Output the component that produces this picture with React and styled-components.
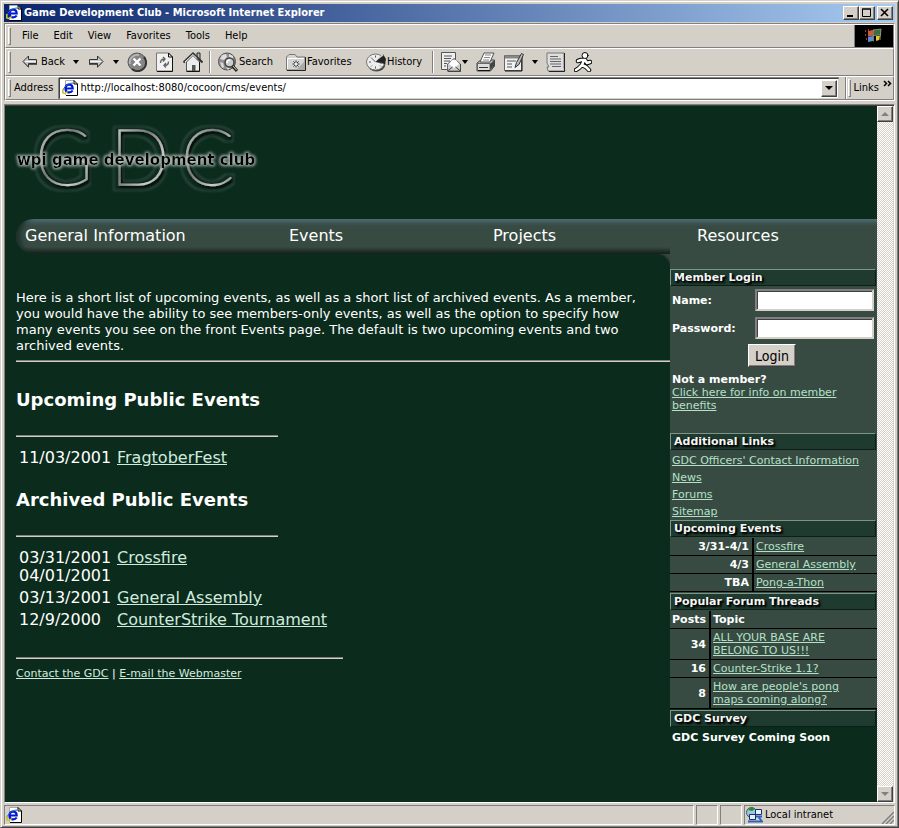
import React from 'react';
import styled, { createGlobalStyle, css } from 'styled-components';

const face = '#d4d0c8';
const deep = '#0b2b1d';
const slate = '#374b42';
const mint = '#b5e0c8';
const ui = '"DejaVu Sans Condensed", "DejaVu Sans", sans-serif';
const web = '"DejaVu Sans", sans-serif';

const Global = createGlobalStyle`
  * { box-sizing: border-box; }
  body { margin: 0; background: ${face}; }
  button, input { font: inherit; margin: 0; padding: 0; border: 0; border-radius: 0; }
  svg { display: block; flex: none; }
`;

const Window = styled.div`
  display: flex;
  flex-direction: column;
  min-height: 100vh;
  padding: 2px;
  background: ${face};
  border: 1px solid;
  border-color: ${face} #404040 #404040 ${face};
  box-shadow: inset 1px 1px #fff, inset -1px -1px #808080;
  font: 11px/14px ${ui};
  color: #000;
`;

const TitleBar = styled.header`
  display: flex;
  align-items: center;
  height: 18px;
  margin: 1px;
  padding: 0 2px;
  gap: 2px;
  background: linear-gradient(90deg, #0a246a, #a6caf0);
`;

const WindowTitle = styled.h1`
  flex: 1;
  margin: 0;
  font: bold 11px/16px ${ui};
  color: #fff;
  white-space: nowrap;
`;

const raised = css`
  background: ${face};
  border: 1px solid;
  border-color: #fff #404040 #404040 #fff;
  box-shadow: inset -1px -1px #808080;
`;

const CaptionButton = styled.button`
  ${raised}
  display: grid;
  place-items: center;
  width: 16px;
  height: 14px;
`;

const CaptionGroup = styled.div`
  display: flex;
  gap: ${p => p.$gap}px;
`;

const Rebar = styled.div`
  margin: 0 1px;
  border: 1px solid;
  border-color: #808080 #fff #fff #808080;
`;

const Band = styled.div`
  display: flex;
  align-items: center;
  height: ${p => p.$h}px;
  border: 1px solid;
  border-color: #fff #808080 #808080 #fff;
`;

const Grip = styled.span`
  width: 3px;
  height: ${p => p.$h}px;
  margin-left: 2px;
  border: 1px solid;
  border-color: #fff #808080 #808080 #fff;
`;

const Menu = styled.nav`
  display: flex;
  flex: 1;
  gap: 15px;
  padding-left: 11px;
`;

const PlainButton = styled.button`
  background: none;
  color: #000;
  line-height: 14px;
`;

const Throbber = styled.div`
  display: grid;
  place-items: center;
  align-self: stretch;
  width: 39px;
  border-left: 1px solid #808080;
  background: #000;
`;

const Tools = styled.div`
  display: flex;
  align-items: center;
  padding-left: 11px;
`;

const Tool = styled.button`
  display: flex;
  align-items: center;
  gap: ${p => p.$gap || 1}px;
  width: ${p => p.$w}px;
  height: 22px;
  background: none;
  white-space: nowrap;
  color: #000;
`;

const Divider = styled.span`
  width: 2px;
  height: 22px;
  margin-right: 7px;
  border-left: 1px solid #808080;
  border-right: 1px solid #fff;
`;

const AddressLabel = styled.label`
  padding: 0 6px 0 3px;
`;

const AddressBox = styled.div`
  display: flex;
  flex: 1;
  align-items: center;
  height: 21px;
  padding: 1px 1px 1px 2px;
  background: #fff;
  border: 1px solid;
  border-color: #404040 ${face} ${face} #404040;
  box-shadow: 0 -1px #808080, -1px 0 #808080;
`;

const AddressInput = styled.input`
  flex: 1;
  min-width: 0;
  padding-left: 2px;
  background: transparent;
  outline: 0;
`;

const SquareButton = styled.button`
  ${raised}
  display: grid;
  place-items: center;
  width: 16px;
  height: ${p => p.$h || 16}px;
`;

const LinksBand = styled.div`
  display: flex;
  align-items: center;
  align-self: stretch;
  gap: 3px;
  margin-left: 6px;
  border-left: 1px solid #808080;
  box-shadow: inset 1px 0 #fff;
`;

const Chevron = styled.span`
  align-self: flex-start;
`;

const View = styled.div`
  display: flex;
  flex: 1;
  margin: 3px 1px 0;
  padding: 1px 1px 0 0;
  border: 1px solid;
  border-color: #808080 #fff #fff #808080;
  box-shadow: inset 0 1px #404040;
`;

const Page = styled.main`
  flex: 1;
  min-width: 0;
  padding-bottom: 54px;
  background: ${deep};
  color: #fff;
  font: 13px/16px ${web};
`;

const Scrollbar = styled.div`
  display: flex;
  flex-direction: column;
  justify-content: space-between;
  width: 16px;
  background: repeating-conic-gradient(#fff 0 25%, ${face} 0 50%) 0 0 / 2px 2px;
`;

const LogoLink = styled.a`
  display: block;
  width: 260px;
`;

const SiteNav = styled.nav`
  display: grid;
  grid-template-columns: 264fr 204fr 204fr 180fr;
  align-items: center;
  height: 35px;
  margin-left: 11px;
  padding: 0 0 1px 9px;
  border-radius: 18px 0 0 18px;
  background:
    linear-gradient(${slate}, ${slate}) right bottom / 207px 28px no-repeat,
    linear-gradient(#4f6f66 0, #3d545a 4px, ${slate} 7px, ${slate} 28px, #17241f 34px);
  box-shadow: inset 9px 0 5px -5px #1c3029;
`;

const NavLink = styled.a`
  color: #fff;
  font-size: 16px;
  line-height: 20px;
  text-decoration: none;
`;

const Columns = styled.div`
  display: flex;
  align-items: flex-start;
  background: linear-gradient(${slate}, ${slate}) top / 100% 24px no-repeat;
`;

const Article = styled.article`
  flex: 1;
  min-width: 0;
  padding: 36px 0 0 11px;
  border-radius: 0 14px 0 0;
  background: ${deep};
  box-shadow: 0 0 4px #101a16;
  clip-path: inset(0);
`;

const Intro = styled.p`
  margin: 0 0 6px;
  padding-right: 14px;
`;

const Rule = styled.hr`
  width: ${p => (p.$w ? p.$w + 'px' : 'auto')};
  margin: 0;
  border: 0;
  border-top: 1px solid #808080;
  border-bottom: 1px solid ${face};
`;

const Heading = styled.h2`
  margin: ${p => p.$top}px 0 24px;
  font-size: 18px;
  line-height: 22px;
`;

const EventTable = styled.table`
  margin-top: 9px;
  border-spacing: 2px;
  font-size: 16px;
  line-height: 18px;

  td { padding: 1px; vertical-align: top; }
  td:first-child { width: 96px; }
`;

const PaleLink = styled.a`
  color: #d0ebde;
`;

const Footer = styled.footer`
  padding-top: 7px;
  font-size: 11px;
`;

const Spaced = styled.div`
  margin-top: ${p => p.$top}px;
`;

const Sidebar = styled.aside`
  width: 207px;
  font-size: 11px;
  line-height: 13px;
`;

const Panel = styled.section`
  background: ${p => (p.$dark ? deep : slate)};
  padding-top: ${p => p.$top || 0}px;
`;

const PanelTitle = styled.h3`
  height: 17px;
  margin: 0 1px ${p => p.$gap || 0}px 0;
  padding-left: 3px;
  border: 1px solid;
  border-color: #7f9489 #0a2016 #0a2016 #7f9489;
  background: #1f3a2e;
  font-size: 11px;
  line-height: 16px;
  color: #f4f6f4;
  text-shadow: 1px 1px 2px #000, 2px 2px 2px #000;
`;

const Field = styled.div`
  display: grid;
  grid-template-columns: 83px 1fr;
  align-items: center;
  height: 28px;
  padding: 0 3px 0 2px;
  font-weight: bold;
`;

const FieldInput = styled.input`
  width: 100%;
  height: 22px;
  padding: 2px;
  background: #fff;
  border: 2px solid;
  border-color: #808080 ${face} ${face} #808080;
  box-shadow: inset 1px 1px #404040;
`;

const LoginButton = styled.button`
  ${raised}
  display: block;
  height: 23px;
  margin: 2px auto 6px 78px;
  padding: 0 6px;
  font: 14px/20px ${ui};
  color: #000;
`;

const MemberNote = styled.p`
  margin: 0;
  padding: 0 20px 21px 2px;
`;

const MintLink = styled.a`
  color: ${mint};
`;

const LinkList = styled.ul`
  margin: 0;
  padding: 2px 0 0 2px;
  list-style: none;
  line-height: 17px;
`;

const SideTable = styled.table`
  width: 100%;
  border-collapse: separate;
  border-spacing: 0;
  table-layout: fixed;

  th, td {
    padding: 2px;
    border-bottom: 1px solid #000;
    text-align: left;
  }
  tr > :last-child {
    padding-right: ${p => p.$inset || 2}px;
  }
  tr > :first-child {
    width: ${p => p.$first}px;
    padding: 2px 3px 2px 0;
    border-right: 2px solid #000;
    text-align: right;
    font-weight: bold;
  }
`;

const SurveyNote = styled.p`
  margin: 0;
  padding: 3px 2px;
  font-weight: bold;
`;

const StatusBar = styled.footer`
  display: grid;
  grid-template-columns: 1fr 22px 22px 151px;
  gap: 2px;
  height: 20px;
  margin: 2px 1px 0;
`;

const StatusCell = styled.div`
  display: flex;
  align-items: center;
  gap: 2px;
  padding-left: 1px;
  border: 1px solid;
  border-color: #808080 #fff #fff #808080;
`;

const Sizer = styled.span`
  align-self: flex-end;
  margin-left: auto;
`;

const IEIcon = () => (
  <svg width="16" height="16" viewBox="0 0 16 16" aria-hidden="true">
    <path d="M4 .5h8l3 3v12H4z" fill="#fff" />
    <path d="M3.500 15V.5H12" fill="none" stroke="#aaa" />
    <path d="M4 15.500h11.500V4M12 .5v3.500h3.500z" fill="none" stroke="#000" />
    <path d="M3.500 8.500h7.200c0-5-7-5.500-7.200 0 0 5 5.500 4.500 7.200 2" fill="none" stroke="#0018d8" strokeWidth="2.200" />
    <path d="M1 13C-1 10 5 3 11 3" fill="none" stroke="#1a62c8" />
    <path d="M.8 9v4l2 .5 3-2" fill="none" stroke="#d8c820" strokeWidth="1.400" />
  </svg>
);

const Caret = ({ fill = '#000', up = false, w = 6 }) => (
  <svg width={w} height="4" viewBox="0 0 6 4" preserveAspectRatio="none" aria-hidden="true">
    <path d={up ? 'M0 4 3 0l3 4z' : 'M0 0h6L3 4z'} fill={fill} />
  </svg>
);

const Arrow = ({ right }) => (
  <svg width="16" height="14" viewBox="0 0 16 14" aria-hidden="true">
    <g transform={right ? 'translate(16 0) scale(-1 1)' : undefined}>
      <path d="M7 2v3h8v5H7v3L1.500 7.500z" fill="#555" />
      <path d="M6.500 1v3.500h8v4h-8V12L1 6.500z" fill="#c9c9c9" stroke="#333" />
      <path d="M3 6.500h11" stroke="#f4f4f4" />
    </g>
  </svg>
);

const StopIcon = () => (
  <svg width="20" height="20" viewBox="0 0 20 20" aria-hidden="true">
    <circle cx="10" cy="10" r="9" fill="#858585" stroke="#555" />
    <path d="M17 5a8.500 8.500 0 0 1-12 12" fill="none" stroke="#333" strokeWidth="2" />
    <path d="M3 12A7.500 7.500 0 0 1 12 3" fill="none" stroke="#b5b5b5" strokeWidth="2" />
    <path d="m6.500 6.500 7 7m0-7-7 7" stroke="#fff" strokeWidth="2.400" />
  </svg>
);

const RefreshIcon = () => (
  <svg width="17" height="20" viewBox="0 0 17 20" aria-hidden="true">
    <path d="M.5 1h12l4 4v14H.5z" fill="#f1f1f1" stroke="#777" />
    <path d="M16.500 5v14.500H1M12.500 1v4h4z" fill="none" stroke="#111" />
    <path d="M4.500 11c0-3 1.500-4 4-4M7 5l2 2-2 2.500M12.500 9.500c0 3-1.500 4-4 4M10 11l-2 2.500 2 2" fill="none" stroke="#666" strokeWidth="1.400" />
  </svg>
);

const HomeIcon = () => (
  <svg width="20" height="20" viewBox="0 0 20 20" aria-hidden="true">
    <path d="M14 8V1h3v9" fill="#bbb" stroke="#222" />
    <path d="M3.500 10 10 3.500l6.500 6.500v9h-13z" fill="#ececec" stroke="#555" />
    <path d="M16.500 10v9.500h-13" fill="none" stroke="#111" />
    <path d="m.5 10.500 9.500-9 9.500 9" fill="none" stroke="#333" strokeWidth="2" />
    <path d="m2 10 8-7.500 4 4" fill="none" stroke="#fff" />
    <path d="M9 13h3.500v6H9z" fill="#555" />
  </svg>
);

const SearchIcon = () => (
  <svg width="20" height="20" viewBox="0 0 20 20" aria-hidden="true">
    <circle cx="9" cy="9.500" r="8.500" fill="#909090" stroke="#555" />
    <path d="m4 3 4-1 1 3-3 3-4-1zM11 2l4 2v3l-4-2zM2 10l3 1 1 4-2 1zM8 15l4 1-2 2z" fill="#dedede" />
    <circle cx="11.500" cy="10.500" r="4.500" fill="#ccc" stroke="#444" strokeWidth="1.500" />
    <path d="M9 11c0-2 1-3 3-3" fill="none" stroke="#fff" strokeWidth="1.500" />
    <path d="m14.500 14 4.500 5" stroke="#222" strokeWidth="3" />
    <path d="m15 14 3.500 4" stroke="#ccc" />
  </svg>
);

const FavoritesIcon = () => (
  <svg width="20" height="20" viewBox="0 0 20 20" aria-hidden="true">
    <path d="M.5 18V5L3 2.500h6L11 5h8v13z" fill="#d4d4d4" stroke="#777" />
    <path d="M19.500 5v13.500H1" fill="none" stroke="#222" />
    <path d="M1.500 17V6.500H18" fill="none" stroke="#fff" />
    <path d="m10 18 9-9v9z" fill="#aaa" />
    <path d="M10 8.500v7M6.500 12h7M7.500 9.500l5 5m0-5-5 5" stroke="#333" />
    <circle cx="10" cy="12" r="1.500" fill="#eee" />
  </svg>
);

const HistoryIcon = () => (
  <svg width="20" height="20" viewBox="0 0 20 20" aria-hidden="true">
    <ellipse cx="10.500" cy="11.500" rx="9" ry="8" fill="#444" />
    <ellipse cx="9.500" cy="10" rx="9" ry="8" fill="#ededed" stroke="#777" />
    <path d="M9.500 10 17 2l3 5-1 5z" fill="#222" />
    <path d="M10 9 16.500 1.500l1 2z" fill="#ccc" />
    <path d="M9.500 3.500v2m0 9v2M3 10h2m9 1h2M5 5.500l1 1m-1 8 1-1m8 0 1 1M9.500 10 6 6.500" stroke="#555" />
  </svg>
);

const MailIcon = () => (
  <svg width="20" height="20" viewBox="0 0 20 20" aria-hidden="true">
    <path d="M.5.500h14v17H.5z" fill="#efefef" stroke="#555" />
    <path d="M3 4h8M3 6.500h7M3 9h6M3 11.500h3M3 14h2" stroke="#555" />
    <path d="M6.500 12 13 6.500 19.500 12v7h-13z" fill="#ccc" stroke="#666" />
    <path d="m8 12 3-4h4l3 4-5 4z" fill="#fff" />
    <path d="M6.500 19l5-4m8 4-5-4M7 19.500h12.500V12" fill="none" stroke="#444" />
  </svg>
);

const PrintIcon = () => (
  <svg width="20" height="20" viewBox="0 0 20 20" aria-hidden="true">
    <path d="m1 11 4-3h13.500v6l-4 5H1z" fill="#bbb" stroke="#444" />
    <path d="m4 10 4-9h10l-4 9z" fill="#fafafa" stroke="#555" />
    <path d="M9 3h6M8 5.500h6M7 8h6" stroke="#888" />
    <path d="M1.500 11.500H14v7H1.500z" fill="#ddd" stroke="#666" />
    <path d="m14 18 4.500-4V8L14 12z" fill="#444" />
    <path d="M3 15.500h9" stroke="#333" />
    <path d="M2 18.500h12" stroke="#111" />
  </svg>
);

const EditIcon = () => (
  <svg width="20" height="20" viewBox="0 0 20 20" aria-hidden="true">
    <path d="M.5 3.500h17v15H.5z" fill="#f2f2f2" stroke="#666" />
    <path d="M1 5h16" stroke="#888" strokeWidth="3" />
    <path d="M18 4v15H1" fill="none" stroke="#111" />
    <path d="M3 9h9M3 12h5M3 15h5" stroke="#555" />
    <path d="m17.500 1.500-5 9-1.500 5 4-3 4.500-10z" fill="#bbb" stroke="#333" />
  </svg>
);

const DiscussIcon = () => (
  <svg width="20" height="20" viewBox="0 0 20 20" aria-hidden="true">
    <path d="M1 1h17v15l1 3H2l-1-4h2L1 11z" fill="#dedede" stroke="#777" />
    <path d="M18.500 1v18.500H3" fill="none" stroke="#222" />
    <path d="M4 4.500h8M4 7h11M4 9.500h11M4 12h11M6 14.500h9" stroke="#666" />
  </svg>
);

const RunnerIcon = () => (
  <svg width="18" height="20" viewBox="0 0 18 20" aria-hidden="true">
    <g strokeLinecap="round" strokeLinejoin="round" fill="none">
      <path d="m10 8-2 5-3 3-3 2m6-5 4 2 3 3M4 9l3-1h4l2 3 3-1" stroke="#000" strokeWidth="4.500" />
      <circle cx="11" cy="3.500" r="3" fill="#fff" stroke="#000" />
      <path d="m10 8-2 5-3 3-3 2m6-5 4 2 3 3M4 9l3-1h4l2 3 3-1" stroke="#fff" strokeWidth="2.600" />
    </g>
  </svg>
);

const FlagIcon = () => (
  <svg width="20" height="18" viewBox="0 0 20 18" aria-hidden="true">
    <path d="M1 4h1m-1 4h1m0 4h1m1-9h1" stroke="#a33" strokeWidth="2" />
    <path d="m4 4 5-1v5l-5 1z" fill="#d4552f" />
    <path d="m10 3 7-1v6h-7z" fill="#387038" />
    <path d="m4 10 5-1v5l-5 1z" fill="#5c8fc9" />
    <path d="M12 9h4l-1 4-3 1z" fill="#e7c52d" />
    <path d="M9.500 2.500v12M4 9l13-1M9 3l8-1-1 11" stroke="#aaa" strokeWidth=".7" fill="none" />
  </svg>
);

const IntranetIcon = () => (
  <svg width="17" height="16" viewBox="0 0 17 16" aria-hidden="true">
    <circle cx="5.500" cy="5.500" r="5" fill="#9fc6dd" stroke="#456" />
    <path d="m2 3 3-3 4 2-3 2z" fill="#2b8b22" />
    <path d="M9.500 2.500h6v5h-6zM3.500 7.500h6v5h-6z" fill="#e4f2ff" stroke="#14307a" />
    <path d="M2 14.500h9M10 9.500h6M11 14.500h5l-3-4" fill="none" stroke="#2a63b8" strokeWidth="2" />
  </svg>
);

const Logo = () => (
  <svg width="260" height="113" viewBox="0 0 260 113" role="img" aria-label="WPI Game Development Club">
    <defs>
      <linearGradient id="chrome" x1="0" y1="0" x2="1" y2="1">
        <stop offset="0" stopColor="#111" />
        <stop offset=".2" stopColor="#bbb" />
        <stop offset=".45" stopColor="#777" />
        <stop offset=".7" stopColor="#ccc" />
        <stop offset="1" stopColor="#666" />
      </linearGradient>
      <filter id="ghost" x="-20%" y="-20%" width="140%" height="140%">
        <feMorphology in="SourceAlpha" operator="dilate" radius="4" result="wide" />
        <feMorphology in="SourceAlpha" operator="dilate" radius="3" result="narrow" />
        <feComposite in="wide" in2="narrow" operator="out" result="ring" />
        <feGaussianBlur in="ring" stdDeviation="0.8" result="softRing" />
        <feFlood floodColor="#40564c" />
        <feComposite in2="softRing" operator="in" result="line" />
        <feOffset in="line" dx="-1" dy="1" result="lowLine" />
        <feGaussianBlur in="SourceAlpha" stdDeviation="1.500" result="blur" />
        <feOffset in="blur" dx="2" dy="2" result="shade" />
        <feMerge>
          <feMergeNode in="lowLine" />
          <feMergeNode in="shade" />
          <feMergeNode in="SourceGraphic" />
        </feMerge>
      </filter>
      <filter id="halo" x="-10%" y="-60%" width="120%" height="220%">
        <feMorphology in="SourceAlpha" operator="dilate" radius="1" />
        <feGaussianBlur stdDeviation="1.500" result="spread" />
        <feFlood floodColor="#aebbb4" />
        <feComposite in2="spread" operator="in" />
        <feMerge>
          <feMergeNode />
          <feMergeNode in="SourceGraphic" />
        </feMerge>
      </filter>
    </defs>
    <g
      fontFamily="Lato, sans-serif"
      fontWeight="200"
      fontSize="78"
      fill="url(#chrome)"
      stroke="url(#chrome)"
      strokeWidth="1.5"
      filter="url(#ghost)"
    >
      <text x="30" y="79">G</text>
      <text x="105" y="79">D</text>
      <text x="176" y="79">C</text>
    </g>
    <text x="12" y="59" fontFamily="DejaVu Sans, sans-serif" fontWeight="700" fontSize="15" filter="url(#halo)">
      wpi game development club
    </text>
  </svg>
);

const upcoming = [['11/03/2001', 'FragtoberFest']];
const archived = [
  ['03/31/2001 04/01/2001', 'Crossfire'],
  ['03/13/2001', 'General Assembly'],
  ['12/9/2000', 'CounterStrike Tournament'],
];
const sideEvents = [['3/31-4/1', 'Crossfire'], ['4/3', 'General Assembly'], ['TBA', 'Pong-a-Thon']];
const threads = [
  ['34', 'ALL YOUR BASE ARE BELONG TO US!!!'],
  ['16', 'Counter-Strike 1.1?'],
  ['8', "How are people's pong maps coming along?"],
];

const Events = ({ rows }) => (
  <EventTable>
    <tbody>
      {rows.map(([date, name]) => (
        <tr key={name}>
          <td>{date}</td>
          <td><PaleLink href="#event">{name}</PaleLink></td>
        </tr>
      ))}
    </tbody>
  </EventTable>
);

const SideRows = ({ rows }) => rows.map(([lead, name]) => (
  <tr key={name}>
    <td>{lead}</td>
    <td><MintLink href="#item">{name}</MintLink></td>
  </tr>
));

export default function App() {
  return (
    <Window>
      <Global />
      <TitleBar>
        <IEIcon />
        <WindowTitle>Game Development Club - Microsoft Internet Explorer</WindowTitle>
        <CaptionGroup $gap={2}>
          <CaptionGroup $gap={0}>
            <CaptionButton aria-label="Minimize">
              <svg width="10" height="10"><path d="M1 8h6" stroke="#000" strokeWidth="2" /></svg>
            </CaptionButton>
            <CaptionButton aria-label="Maximize">
              <svg width="10" height="10"><path d="M.5 1h8v7.500h-8zM0 1h9" fill="none" stroke="#000" /></svg>
            </CaptionButton>
          </CaptionGroup>
          <CaptionButton aria-label="Close">
            <svg width="10" height="10"><path d="m1 1 7 7m0-7-7 7" stroke="#000" strokeWidth="1.600" /></svg>
          </CaptionButton>
        </CaptionGroup>
      </TitleBar>

      <Rebar>
        <Band $h={24}>
          <Grip $h={18} />
          <Menu>
            {['File', 'Edit', 'View', 'Favorites', 'Tools', 'Help'].map(m => <PlainButton key={m}>{m}</PlainButton>)}
          </Menu>
          <Throbber><FlagIcon /></Throbber>
        </Band>
        <Band $h={28}>
          <Grip $h={22} />
          <Tools>
            <Tool $w={51} $gap={3}><Arrow />Back</Tool>
            <Tool $w={15} aria-label="Back history"><Caret /></Tool>
            <Tool $w={25} aria-label="Forward"><Arrow right /></Tool>
            <Tool $w={14} aria-label="Forward history"><Caret /></Tool>
            <Tool $w={29} aria-label="Stop"><StopIcon /></Tool>
            <Tool $w={27} aria-label="Refresh"><RefreshIcon /></Tool>
            <Tool $w={26} aria-label="Home"><HomeIcon /></Tool>
            <Divider />
            <Tool $w={68}><SearchIcon />Search</Tool>
            <Tool $w={80}><FavoritesIcon />Favorites</Tool>
            <Tool $w={66}><HistoryIcon />History</Tool>
            <Divider />
            <Tool $w={21} aria-label="Mail"><MailIcon /></Tool>
            <Tool $w={14} aria-label="Mail options"><Caret /></Tool>
            <Tool $w={28} aria-label="Print"><PrintIcon /></Tool>
            <Tool $w={28} aria-label="Edit page"><EditIcon /></Tool>
            <Tool $w={14} aria-label="Edit options"><Caret /></Tool>
            <Tool $w={28} aria-label="Discuss"><DiscussIcon /></Tool>
            <Tool $w={18} aria-label="Messenger"><RunnerIcon /></Tool>
          </Tools>
        </Band>
        <Band $h={24}>
          <Grip $h={18} />
          <AddressLabel htmlFor="address">Address</AddressLabel>
          <AddressBox>
            <IEIcon />
            <AddressInput id="address" defaultValue="http://localhost:8080/cocoon/cms/events/" />
            <SquareButton $h={17} aria-label="Show addresses"><Caret w={8} /></SquareButton>
          </AddressBox>
          <LinksBand>
            <Grip $h={18} />
            <span>Links</span>
            <Chevron>
              <svg width="11" height="12"><path d="m2 4 2.500 2.500L2 9m4-5 2.500 2.500L6 9" fill="none" stroke="#000" strokeWidth="1.500" /></svg>
            </Chevron>
          </LinksBand>
        </Band>
      </Rebar>

      <View>
        <Page>
          <LogoLink href="#home"><Logo /></LogoLink>
          <SiteNav>
            {['General Information', 'Events', 'Projects', 'Resources'].map(n => <NavLink key={n} href="#section">{n}</NavLink>)}
          </SiteNav>
          <Columns>
            <Article>
              <Intro>
                Here is a short list of upcoming events, as well as a short list of archived events. As a member, you
                would have the ability to see members-only events, as well as the option to specify how many events
                you see on the front Events page. The default is two upcoming events and two archived events.
              </Intro>
              <Rule />
              <Heading $top={27}>Upcoming Public Events</Heading>
              <Rule $w={262} />
              <Events rows={upcoming} />
              <Heading $top={19}>Archived Public Events</Heading>
              <Rule $w={262} />
              <Events rows={archived} />
              <Spaced $top={25}>
                <Rule $w={327} />
                <Footer>
                  <PaleLink href="#contact">Contact the GDC</PaleLink> | <PaleLink href="#mail">E-mail the Webmaster</PaleLink>
                </Footer>
              </Spaced>
            </Article>
            <Sidebar>
              <Panel $top={15}>
                <PanelTitle>Member Login</PanelTitle>
                <Field>
                  <label htmlFor="name">Name:</label>
                  <FieldInput id="name" />
                </Field>
                <Field>
                  <label htmlFor="password">Password:</label>
                  <FieldInput id="password" type="password" />
                </Field>
                <LoginButton>Login</LoginButton>
                <MemberNote>
                  <b>Not a member?</b><br />
                  <MintLink href="#benefits">Click here for info on member benefits</MintLink>
                </MemberNote>
              </Panel>
              <Panel>
                <PanelTitle>Additional Links</PanelTitle>
                <LinkList>
                  {["GDC Officers' Contact Information", 'News', 'Forums', 'Sitemap'].map(l => (
                    <li key={l}><MintLink href="#link">{l}</MintLink></li>
                  ))}
                </LinkList>
              </Panel>
              <Panel>
                <PanelTitle $gap={1}>Upcoming Events</PanelTitle>
                <SideTable $first={84}>
                  <tbody><SideRows rows={sideEvents} /></tbody>
                </SideTable>
              </Panel>
              <Panel $top={1}>
                <PanelTitle $gap={1}>Popular Forum Threads</PanelTitle>
                <SideTable $first={41} $inset={25}>
                  <thead><tr><th>Posts</th><th>Topic</th></tr></thead>
                  <tbody><SideRows rows={threads} /></tbody>
                </SideTable>
              </Panel>
              <Panel $dark $top={1}>
                <PanelTitle $gap={1}>GDC Survey</PanelTitle>
                <SurveyNote>GDC Survey Coming Soon</SurveyNote>
              </Panel>
            </Sidebar>
          </Columns>
        </Page>
        <Scrollbar>
          <SquareButton aria-label="Scroll up"><Caret up w={8} fill="#808080" /></SquareButton>
          <SquareButton aria-label="Scroll down"><Caret w={8} fill="#808080" /></SquareButton>
        </Scrollbar>
      </View>

      <StatusBar>
        <StatusCell><IEIcon /></StatusCell>
        <StatusCell />
        <StatusCell />
        <StatusCell>
          <IntranetIcon />
          <span>Local intranet</span>
          <Sizer>
            <svg width="14" height="14"><path d="M2 14 14 2M6 14l8-8m-4 8 4-4" stroke="#808080" strokeWidth="1.500" /></svg>
          </Sizer>
        </StatusCell>
      </StatusBar>
    </Window>
  );
}
